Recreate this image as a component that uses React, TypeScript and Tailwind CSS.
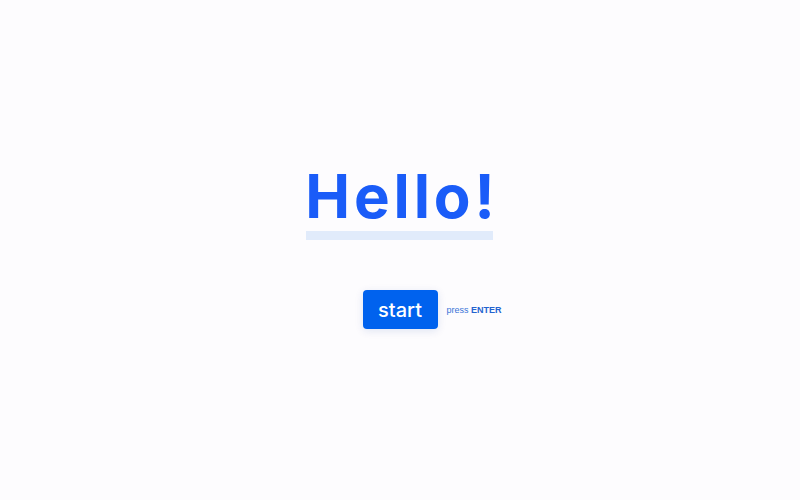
import React from "react";

export default function App() {
  return (
    <div className="w-[800px] h-[500px] bg-[#fdfcfe] flex flex-col items-center" style={{ fontFamily: "Inter, 'Liberation Sans', sans-serif" }}>
      <div className="mt-[162px] flex flex-col items-center">
        <h1 className="text-[60px] leading-[68px] font-bold text-[#1a5cf8] tracking-[0.065em] pl-[0.065em]">Hello!</h1>
        <div className="w-[187px] h-[9px] bg-[#e1ebfb] mt-[1px]" />
      </div>
      <div className="relative mt-[50px]">
        <button className="w-[75px] h-[39px] rounded-[4px] bg-[#0062ee] text-white text-[20px] font-medium shadow-[0_2px_8px_rgba(0,60,160,0.12)]">start</button>
        <span className="absolute left-[84px] top-[14px] whitespace-nowrap text-[9px] leading-[12px] text-[#3a74d8]" style={{ fontFamily: "'Liberation Sans', Arial, sans-serif" }}>
          press <b className="text-[#2563cf]">ENTER</b>
        </span>
      </div>
    </div>
  );
}
